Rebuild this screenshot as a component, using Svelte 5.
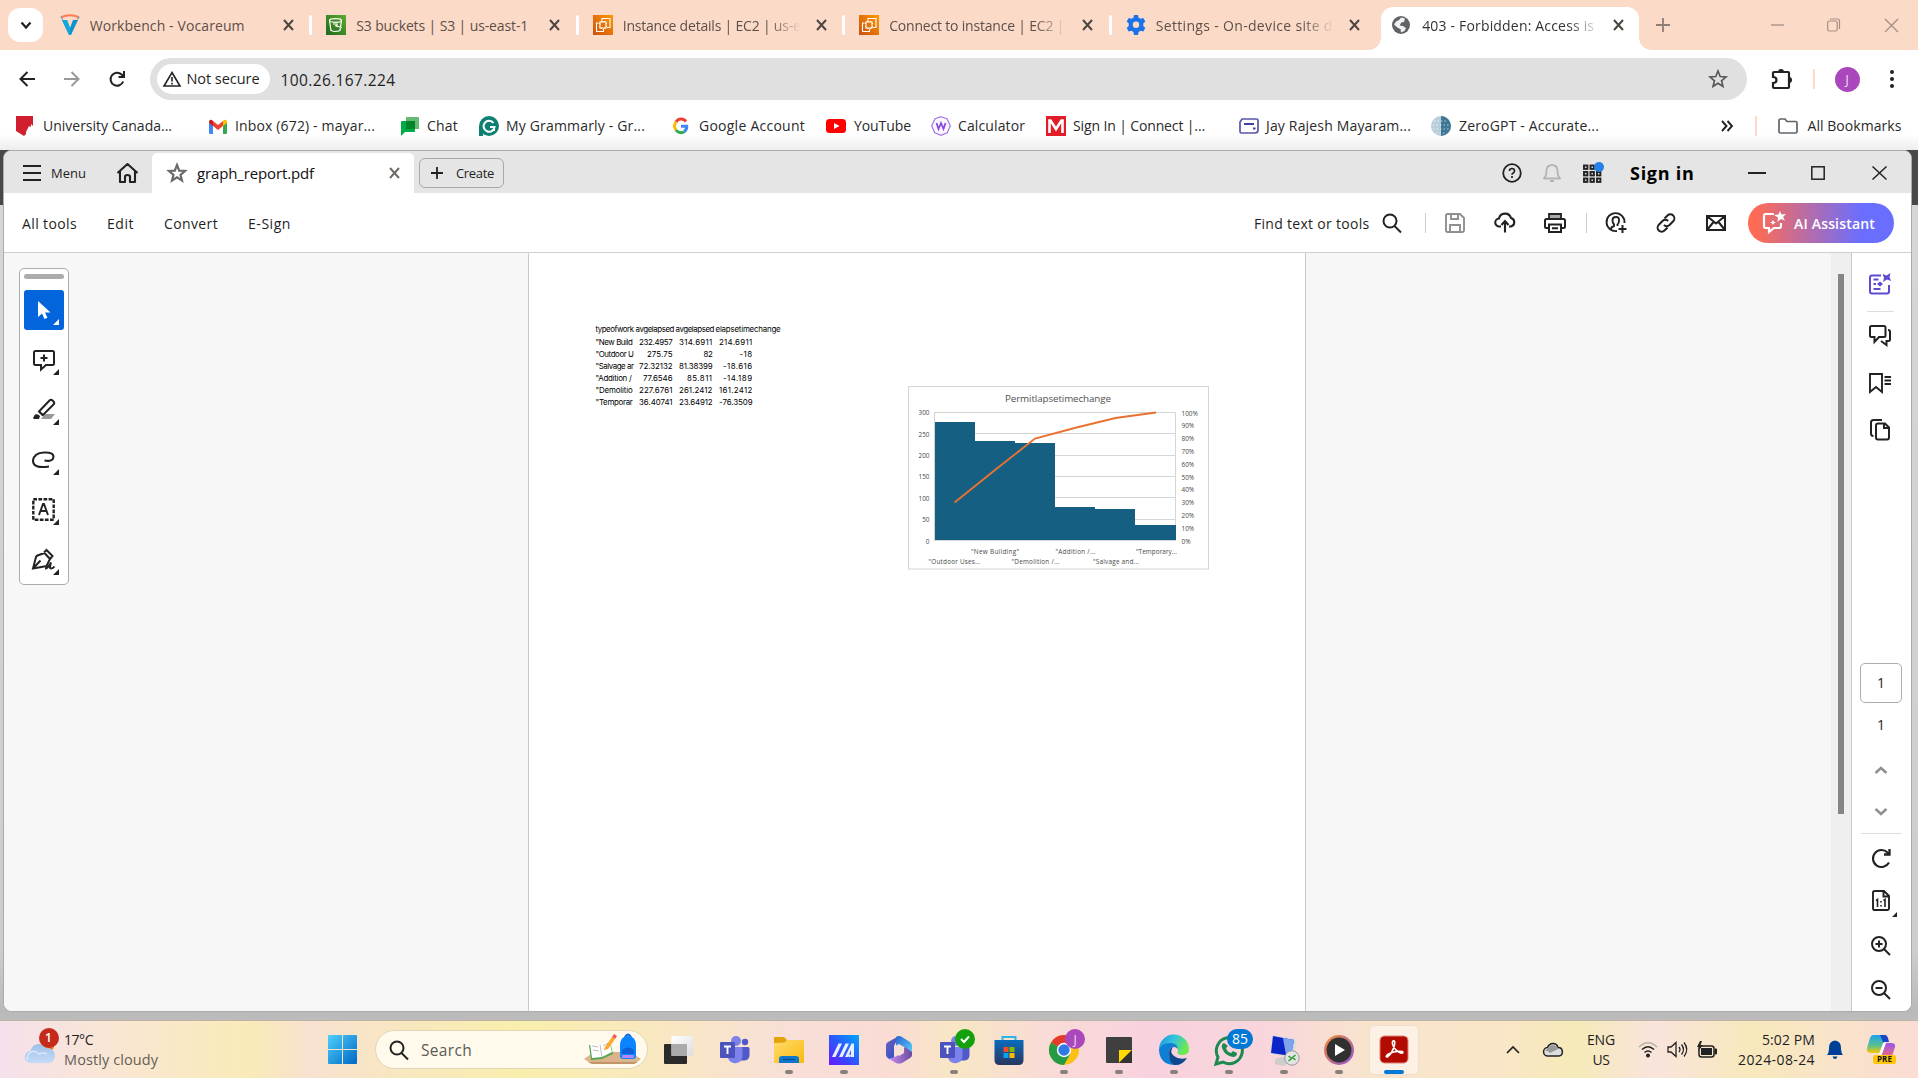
<script>
  // Adjusts tracking so that a label takes a given width.
  function fit(node, width) {
    if (!width) return;
    const natural = node.getBoundingClientRect().width;
    const count = node.textContent.length;
    node.style.letterSpacing = (width - natural) / count + 'px';
  }

  const ec2 = `<defs><linearGradient id="ec" x1="0" y1="1" x2="1" y2="0"><stop offset="0" stop-color="#cc4f10"/><stop offset="1" stop-color="#f90"/></linearGradient></defs><rect width="20" height="20" fill="url(#ec)"/><g fill="none" stroke="#fff" stroke-width="1.100"><path d="M9 6.500V3.500h8v9h-3M5.500 8H3.500v8.500h7V14"/><rect x="7" y="7" width="6" height="6"/><path d="M6 8.500h1M6 11.500h1M13 8.500h1M13 11.500h1M8.500 6v1M11.500 6v1M8.500 13v1M11.500 13v1"/></g>`;
  const teams = `<circle cx="17" cy="6" r="5" fill="#7b83eb"/><circle cx="26" cy="7" r="3.200" fill="#5059c9"/><path d="M21 12h8q1.500 0 1.500 1.500V20q0 5-5 5.500h-5z" fill="#5059c9"/><path d="M9 12h14.500v10a7.500 7.500 0 0 1-14.500 1z" fill="#7b83eb"/><rect x="1" y="7" width="15" height="16" rx="1" fill="#4b53bc"/><path d="M5 11.500h7M8.500 11.500V19" stroke="#fff" stroke-width="1.900"/>`;

  const art = {
    chevDown: `<path d="M2.500 4.500l4.500 5 4.500-5" fill="none" stroke="#222" stroke-width="2.200"/>`,
    voc: `<path d="M1.500 2Q10-1.500 18.500 2" fill="none" stroke="#ff7a50" stroke-width="2"/><path d="M0 2l2-1 1.500 5zM20 2l-2-1-1.500 5z" fill="#99a"/><path d="M2 5h5l3 8 3-8h5l-7 15h-2z" fill="#0a93cc"/><path d="M2 5h5l3 8v7H9z" fill="#12a8dc"/>`,
    s3: `<defs><linearGradient id="s3g" x1="0" y1="1" x2="1" y2="0"><stop offset="0" stop-color="#1c6a1c"/><stop offset="1" stop-color="#5faa30"/></linearGradient></defs><rect width="20" height="20" fill="url(#s3g)"/><g fill="none" stroke="#fff" stroke-width="1.200"><ellipse cx="9.500" cy="5.500" rx="6" ry="1.800"/><path d="M3.500 5.500L5 15.500q4.500 2 9 0L15.500 5.500M7 9h4v3M9 10.500l7 2"/></g>`,
    ec2,
    gear: `<path d="M8 0h4l.6 2.700 2 1.100 2.700-.9 2 3.600-2 1.900v2.700l2 2-2 3.500-2.700-.9-2 1.200L12 20H8l-.6-3.100-2-1.200-2.700.9-2-3.500 2-2V8.400l-2-1.900 2-3.600 2.700.9 2-1.100z" fill="#1a73e8"/><circle cx="10" cy="9.800" r="3.200" fill="#fcdac8"/>`,
    globe: `<circle cx="9" cy="9" r="9" fill="#5f6368"/><path d="M9 1.500l4 1-1 3.500-3 1-1 2.500 3 .5 3 2-1.500 3L9 16.500l-.5-3.500-2.500-1-4-3.500L4 5.500 7 4z" fill="#fff" opacity=".9"/><path d="M10 6l4 3-2 1-4-1z" fill="#5f6368"/>`,
    x: `<path d="M1 1l9 10M10 1L1 11" fill="none" stroke="#4c4540" stroke-width="2"/>`,
    xThin: `<path d="M1 1l13 13M14 1L1 14" fill="none" stroke="#a38f86" stroke-width="1.300"/>`,
    plus: `<path d="M7 0v14M0 7h14" stroke="#8d7d75" stroke-width="1.800"/>`,
    min: `<path d="M0 1h13" stroke="#a38f86" stroke-width="1.300"/>`,
    restore: `<g fill="none" stroke="#a38f86" stroke-width="1.200"><rect x=".7" y="3" width="9.500" height="10" rx="1.500"/><path d="M3 1h7.500q2 0 2 2v8"/></g>`,
    back: `<path d="M16 8H2M8.500 1L1.500 8l7 7" fill="none" stroke="#222" stroke-width="2"/>`,
    fwd: `<path d="M0 8h14M7.500 1l7 7-7 7" fill="none" stroke="#999" stroke-width="2"/>`,
    reload: `<path d="M14.200 10.500A6.500 6.500 0 1 1 12.600 3.500L15 6" fill="none" stroke="#222" stroke-width="2"/><path d="M15 0v6H9.500" fill="none" stroke="#222" stroke-width="2"/>`,
    warn: `<path d="M9 1.500L17 15H1z" fill="none" stroke="#222" stroke-width="1.600"/><path d="M9 6v4.500M9 11.800v1.700" stroke="#222" stroke-width="1.600"/>`,
    star: `<path d="M10 2l2.200 5.600 5.800.4-4.500 3.800 1.500 5.700-5-3.200-5 3.200 1.500-5.700L2 8l5.800-.4z" fill="none" stroke="#555" stroke-width="1.600"/>`,
    starBold: `<path d="M10 2l2.200 5.600 5.800.4-4.500 3.800 1.500 5.700-5-3.200-5 3.200 1.500-5.700L2 8l5.800-.4z" fill="none" stroke="#6b6b6b" stroke-width="2.200"/>`,
    puzzle: `<path d="M3 4h14q1 0 1 1v14q0 1-1 1H3q-1 0-1-1v-4q3.500 0 3.500-3T2 9V5q0-1 1-1z" fill="none" stroke="#222" stroke-width="2.200"/><path d="M7 4a3 3 0 0 1 6 0zM18 9a3 3 0 0 1 0 6z" fill="#222"/>`,
    dots: `<circle cx="3" cy="3" r="2" fill="#222"/><circle cx="3" cy="10" r="2" fill="#222"/><circle cx="3" cy="17" r="2" fill="#222"/>`,
    ucw: `<path d="M0 0h17v10l-2-2v3l-2-1-2 4-1 2v2l-2 2-8-5z" fill="#d0202f"/>`,
    gmail: `<path d="M0 3v11q0 1 1 1h3V6z" fill="#4285f4"/><path d="M14 6v9h3q1 0 1-1V3z" fill="#34a853"/><path d="M4 7V2l5 4 5-4v5l-5 4z" fill="#ea4335"/><path d="M0 4V3q0-3 3-2l1 1v5z" fill="#c5221f"/><path d="M18 4V3q0-3-3-2l-1 1v5z" fill="#fbbc04"/>`,
    chat: `<path d="M5 0h12q1 0 1 1v11H5z" fill="#66bb74"/><path d="M0 5q0-1 1-1h12q1 0 1 1v10H4l-4 4z" fill="#00ac47"/><rect x="5" y="4" width="9" height="8" fill="#00832d"/>`,
    grammarly: `<circle cx="10" cy="10" r="10" fill="#0d8072"/><path d="M0 10h4v10H0z" fill="#0d8072"/><path d="M14.500 7A5.500 5.500 0 1 0 15.500 11H11M15 15v-4" fill="none" stroke="#fff" stroke-width="2"/>`,
    google: `<g fill="none" stroke-width="3"><path d="M13 3.500A6 6 0 0 0 3 4" stroke="#ea4335"/><path d="M3 4a6.500 6.500 0 0 0 0 8" stroke="#fbbc04"/><path d="M3 12a6 6 0 0 0 8.500 1.500" stroke="#34a853"/><path d="M11.500 13.500Q14 11.500 13.700 8.200H8" stroke="#4285f4"/></g>`,
    youtube: `<rect width="20" height="14" rx="3.500" fill="#f00"/><path d="M8 4l5.500 3L8 10z" fill="#fff"/>`,
    calc: `<path d="M10 .7l6 2 3.300 7-3 7-6.300 2.600-6.300-2.600-3-7 3.300-7z" fill="#fbf7ff" stroke="#a274e8" stroke-width="1.200"/><path d="M5.500 7l2 6 2.500-6 2.500 6 2-6" fill="none" stroke="#8b4be0" stroke-width="1.800"/>`,
    mc: `<rect width="20" height="20" fill="#e21d25"/><path d="M3.500 17V4.500h1L10 13l5.500-8.500h1V17" fill="none" stroke="#fff" stroke-width="2.600"/>`,
    card: `<path d="M3 1h14.500q1.500 0 1.500 1.500V12q0 3-3 3H2.500Q1 15 1 13.500V4z" fill="#fff" stroke="#5656a8" stroke-width="1.700"/><path d="M5 6h10M14 10.500h2.500" stroke="#4040a0" stroke-width="1.800"/>`,
    zero: `<circle cx="10" cy="10" r="10" fill="#b8cfdb"/><path d="M10 0a10 10 0 0 1 0 20z" fill="#3f7896"/><g stroke="#fff" stroke-dasharray="1.500 2" opacity=".6"><path d="M3 5h14M2 9h16M2 13h16M5 17h10"/></g>`,
    more: `<path d="M1 1l4.500 5L1 11M6.500 1L11 6l-4.500 5" fill="none" stroke="#222" stroke-width="1.900"/>`,
    folder: `<path d="M1 2.500Q1 1 2.500 1H7l2 2.500h8.500Q19 3.500 19 5v8.500q0 1.500-1.500 1.500h-15Q1 15 1 13.500z" fill="none" stroke="#5f6368" stroke-width="1.700"/>`,
    burger: `<path d="M0 2h18M0 9h18M0 16h18" stroke="#222" stroke-width="1.900"/>`,
    home: `<path d="M1.500 11L11.500 2l10 9M4 9.500V20h5v-5.500q0-1.500 2.500-1.500t2.500 1.500V20h5V9.500" fill="none" stroke="#222" stroke-width="2.100" stroke-linejoin="round"/>`,
    plusDark: `<path d="M6 0v12M0 6h12" stroke="#222" stroke-width="1.800"/>`,
    help: `<circle cx="10" cy="10" r="8.800" fill="none" stroke="#222" stroke-width="1.800"/><path d="M7.500 8q0-2.500 2.500-2.500T12.500 8q0 1.300-1.300 2-1.200.6-1.200 1.700M10 13v2" fill="none" stroke="#222" stroke-width="1.700"/>`,
    bell: `<path d="M1 15.500q2.500-2.500 2.500-8Q4 2 9 2t5.500 5.500q0 5.500 2.500 8zM7 18h4" fill="none" stroke="#b5b5b5" stroke-width="1.900" stroke-linejoin="round"/>`,
    grid: `<g fill="none" stroke="#222" stroke-width="1.900"><rect x="1" y="3.500" width="3.400" height="3.400"/><rect x="7.500" y="3.500" width="3.400" height="3.400"/><rect x="14" y="3.500" width="3.400" height="3.400"/><rect x="1" y="10" width="3.400" height="3.400"/><rect x="7.500" y="10" width="3.400" height="3.400"/><rect x="14" y="10" width="3.400" height="3.400"/><rect x="1" y="16.500" width="3.400" height="3.400"/><rect x="7.500" y="16.500" width="3.400" height="3.400"/><rect x="14" y="16.500" width="3.400" height="3.400"/></g><circle cx="16" cy="5" r="5" fill="#2680eb"/>`,
    minDark: `<path d="M0 1h18" stroke="#222" stroke-width="1.800"/>`,
    maxDark: `<rect x=".8" y=".8" width="12.400" height="12.400" fill="none" stroke="#222" stroke-width="1.500"/>`,
    xDark: `<path d="M.5.5l14 13M14.500.5l-14 13" stroke="#222" stroke-width="1.500"/>`,
    search: `<circle cx="8" cy="8" r="6.500" fill="none" stroke="#222" stroke-width="2"/><path d="M12.500 13l6.500 6.500" stroke="#222" stroke-width="2"/>`,
    save: `<g fill="none" stroke="#8f8f8f" stroke-width="1.900"><path d="M2.500 1H15l4 4v12.500q0 1.500-1.500 1.500h-15Q1 19 1 17.500v-15Q1 1 2.500 1zM6 1v5h7V1M5 19v-7h10v7"/></g>`,
    cloud: `<path d="M7 14.500H5.500a4 4 0 0 1-.5-8A6.200 6.200 0 0 1 17 6a4.400 4.400 0 0 1 0 8.500h-2M11 20.500V9.500M7.500 13L11 9l3.500 4" fill="none" stroke="#222" stroke-width="2.100"/>`,
    print: `<path d="M5 6V1h12v5" fill="#aaa" stroke="#222" stroke-width="1.800"/><path d="M5 15H2.500Q1 15 1 13.500v-6Q1 6 2.500 6h17Q21 6 21 7.500v6q0 1.500-1.500 1.500H17M5 11.500h12V19H5zM8 15.200h6" fill="none" stroke="#222" stroke-width="2"/>`,
    person: `<path d="M19.500 11A9 9 0 1 0 12 19" fill="none" stroke="#222" stroke-width="1.900"/><path d="M6 17q0-2 3-3v-1.500Q7.500 11 7.500 8T11 5t3 3.500q0 3-1.500 4V14" fill="none" stroke="#222" stroke-width="1.900"/><path d="M17.500 13v8M13.500 17h8" stroke="#222" stroke-width="2"/>`,
    link: `<path d="M8.500 5.500L11.500 2.500a4 4 0 0 1 5.700 5.700L13.500 12a4 4 0 0 1-5.600 0M11.500 14.500L8.500 17.500a4 4 0 0 1-5.700-5.700L6.500 8a4 4 0 0 1 5.600 0" fill="none" stroke="#222" stroke-width="2"/>`,
    mail: `<path d="M1 1h18v14H1zl9 7.500L19 1M1 15l6.500-8M19 15l-6.500-8" fill="none" stroke="#222" stroke-width="2"/>`,
    ai: `<path d="M12 3H4Q2 3 2 5v10q0 2 2 2h3v4l5-4h5q2 0 2-2v-3" fill="none" stroke="#fff" stroke-width="2.200"/><path d="M18 0l1.500 3.500L24 3l-3 3 2 3.500-4-1.500-3.500 3 .5-4.500L12 4l4.500-.5z" fill="#fff"/><path d="M11 9l1 1.700 2 .8-2 .8-1 1.700-1-1.700-2-.8 2-.8z" fill="#fff"/>`,
    pointer: `<path d="M3 1v16l4-3.500L9.500 19l3-1.200L10 12.500h5.500z" fill="#fff"/>`,
    note: `<path d="M2.500 2h17q1.500 0 1.500 1.500v11q0 1.500-1.500 1.500H13l-5 4.500V16H2.500Q1 16 1 14.500v-11Q1 2 2.500 2zM11 5.500v7M7.500 9h7" fill="none" stroke="#222" stroke-width="2"/>`,
    marker: `<path d="M12 15h10l-4 5H8z" fill="#999"/><path d="M6 12.500L16.500 1.500q1.500-1.500 3 0l1 1q1.500 1.500 0 3L10 16zM6 12.500l4 4" fill="#fff" stroke="#222" stroke-width="2"/><path d="M0 19l2-3.500q3-1 5 1.500l-1 3H1z" fill="#222"/>`,
    loop: `<path d="M17 16.500Q1 19 1 10.500 2 3 12 2.500q9.500-.5 9.500 4.500-.5 5-9 3.500" fill="none" stroke="#222" stroke-width="2.100"/>`,
    textbox: `<rect x="1.300" y="1.300" width="20.400" height="20.400" fill="none" stroke="#222" stroke-width="2.400" stroke-dasharray="3.700 1.400"/><path d="M7 17l4-11h1l4 11M8.500 13h6" fill="none" stroke="#222" stroke-width="1.900"/>`,
    pen: `<path d="M1 19.500L4 8q.5-1 1.500-1.500l7-2.500 5.500 6-3 6q-.5 1-1.500 1.300zM1 19.500l7.500-8M12 3.500L14.500 1l6 6L18 10" fill="none" stroke="#222" stroke-width="2"/><path d="M13 19.500q3 0 6-6-2 6 0 6t3.500-2" fill="none" stroke="#222" stroke-width="2"/>`,
    gen: `<path d="M12 2.500H3q-2 0-2 2v14q0 2 2 2h15q2 0 2-2V12M4.500 6.500h5M4.500 11H7M4.500 16h7" fill="none" stroke="#5c4bd3" stroke-width="2"/><path d="M13.500 1l4 1.500L21.500 0l-1 4 1.500 4-4-1.500-4 2.500 1-4z" fill="#5c4bd3"/><path d="M11 8.500l3 2.500-3 2.500-3-2.500z" fill="#5c4bd3"/>`,
    comments: `<path d="M2.500 1H15q1.500 0 1.500 1.500v8q0 1.500-1.500 1.500h-5l-4.500 5v-5H2.500Q1 12 1 10.500v-8Q1 1 2.500 1zM19 5q2 0 2 1.500v8q0 1.500-2 1.500h-1.500v4L12 16" fill="none" stroke="#222" stroke-width="2"/>`,
    bookmark: `<path d="M1 2h12v18l-6-5-6 5zM15.500 5H22M15.500 8.500H22M15.500 12H22" fill="none" stroke="#222" stroke-width="1.900"/>`,
    pages: `<path d="M3.500 17Q1 17 1 14.500v-11Q1 1 3.500 1H12M8 4.500h7l4 4v10q0 2-2 2H8q-2 0-2-2v-12q0-2 2-2zM14 4.500V9h5" fill="none" stroke="#222" stroke-width="2"/>`,
    up: `<path d="M1.500 8L7 3l5.500 5" fill="none" stroke="#909090" stroke-width="2.500"/>`,
    down: `<path d="M1.500 2L7 7l5.500-5" fill="none" stroke="#909090" stroke-width="2.500"/>`,
    rotate: `<path d="M18 14.500A8.500 8.500 0 1 1 16.500 4.500L18 6.500" fill="none" stroke="#222" stroke-width="2.100"/><path d="M18.500 1v5.500H13" fill="none" stroke="#222" stroke-width="2.300"/>`,
    actual: `<path d="M3 1h9l5 5v12.500q0 1.500-1.500 1.500H3q-2 0-2-1.500v-16Q1 1 3 1zM11.500 1v5.500H17" fill="none" stroke="#222" stroke-width="1.900"/><path d="M4 10.500l1.500-1V17M11.500 10.500l1.500-1V17M9 11v1.600M9 15v1.600" fill="none" stroke="#222" stroke-width="1.600"/>`,
    zin: `<circle cx="8" cy="8" r="7" fill="none" stroke="#222" stroke-width="2"/><path d="M13 13l6 6M8 4.500v7M4.500 8h7" stroke="#222" stroke-width="2"/>`,
    zout: `<circle cx="8" cy="8" r="7" fill="none" stroke="#222" stroke-width="2"/><path d="M13 13l6 6M4.500 8h7" stroke="#222" stroke-width="2"/>`,
    weather: `<defs><linearGradient id="wc" x1="0" y1="0" x2="0" y2="1"><stop offset="0" stop-color="#9fbfe9"/><stop offset="1" stop-color="#c5dcf6"/></linearGradient></defs><circle cx="24" cy="18" r="5" fill="#ef7a14"/><path d="M6 35a6 6 0 0 1-.5-12A8.500 8.500 0 0 1 21 20a7.800 7.800 0 0 1 4 15z" fill="url(#wc)"/><path d="M3 32a6 6 0 0 1 3-8q4-2 8 2 4-2 8 0" fill="none" stroke="#d9e9fb" stroke-width="1.500"/><circle cx="24" cy="10" r="10" fill="#c42b1c"/>`,
    win: `<defs><linearGradient id="wn" x1="0" y1="0" x2="1" y2="1"><stop offset="0" stop-color="#4fd0fb"/><stop offset="1" stop-color="#0067c6"/></linearGradient></defs><path d="M1 0h13v14H0V1q0-1 1-1zM15 0h13q1 0 1 1v13H15zM0 15h14v14H1q-1 0-1-1zM15 15h14v13q0 1-1 1H15z" fill="url(#wn)"/>`,
    school: `<path d="M0 25l10-7h36l11 7-7 5H8z" fill="#dcb48c"/><path d="M8 30h42l4-2H4z" fill="#c2946a"/><path d="M5 11l11 2 10-6 3 13-11 5-11 1z" fill="#56a552"/><path d="M6 9l10 2 9-5 3 12-10 5-10 1z" fill="#fff"/><path d="M16 11l2 12M8 12l6 1M9 16l6 1M19 12l5-3M20 16l5-3" stroke="#bbb"/><path d="M21 13l7-10 3 2-7 10-4 1z" fill="#fda92d"/><path d="M28 3l2-3 3 2-2 3z" fill="#ef5b5b"/><path d="M41 3q3-5 6 0" fill="none" stroke="#0b62d6" stroke-width="2"/><path d="M36 12q0-10 8-10t8 10v10q0 3-3 3H39q-3 0-3-3z" fill="#0a84ff"/><path d="M38 16q6-5 12 0v4H38z" fill="#0f5fd8"/><rect x="38" y="21" width="12" height="3" rx="1" fill="#b388ff"/>`,
    taskview: `<defs><linearGradient id="tv" x1="0" y1="0" x2="1" y2="1"><stop offset="0" stop-color="#fff"/><stop offset="1" stop-color="#ddd"/></linearGradient></defs><rect x="0" y="9" width="23" height="20" rx="1" fill="#2b2b2b"/><rect x="7.500" y="1" width="22" height="20" rx="1" fill="url(#tv)"/><rect x="7.500" y="9" width="15.500" height="12" fill="#aaa"/>`,
    teams,
    explorer: `<defs><linearGradient id="fx" x1="0" y1="0" x2="1" y2="1"><stop offset="0" stop-color="#ffdc6b"/><stop offset="1" stop-color="#fbb911"/></linearGradient></defs><path d="M0 8V3q0-1 1-1h9l3 3h15q2 0 2 2z" fill="#e2a20a"/><path d="M0 8h10l3-3h16q1 0 1 1v21q0 1-1 1H1q-1 0-1-1z" fill="url(#fx)"/><path d="M5 28v-4q0-3 3-3h14q3 0 3 3v4z" fill="#0f78cc"/><path d="M9 24.500h12" stroke="#0a4e8c" stroke-width="1.200"/>`,
    asus: `<defs><linearGradient id="as" x1="0" y1="1" x2="1" y2="0"><stop offset="0" stop-color="#6a18ff"/><stop offset=".5" stop-color="#2b56ff"/><stop offset="1" stop-color="#00a8ff"/></linearGradient></defs><rect width="30" height="30" fill="url(#as)"/><path d="M3 22L9.500 8.500H13L6.500 22zM10 22L16.500 8.500H20L13.500 22zM16 22l6.500-13.500H25V22h-3v-7l-3 7z" fill="#e7efff"/><circle cx="20.500" cy="20.800" r="1.400" fill="#e7efff"/>`,
    m365: `<defs><linearGradient id="ma" x1="0" y1="0" x2="1" y2="1"><stop offset="0" stop-color="#7d5fc0"/><stop offset="1" stop-color="#174fc4"/></linearGradient><linearGradient id="mb" x1="0" y1="0" x2="1" y2="1"><stop offset="0" stop-color="#2c62d0"/><stop offset="1" stop-color="#58d5ff"/></linearGradient><linearGradient id="mc5" x1="0" y1="0" x2="1" y2="0"><stop offset="0" stop-color="#c58cf2"/><stop offset="1" stop-color="#6b4a9c"/></linearGradient></defs><path d="M15 1L4 7q-2 1-2 3v10q0 2 3 4l5-1V11z" fill="url(#ma)"/><path d="M12 2q3-2 6 0l8 5q2 1 2 4v8l-8-7-8-1z" fill="url(#mb)"/><path d="M28 17v3q0 2-2 3l-8 5q-3 1-6 0l-7-4 8-3 8-9z" fill="url(#mc5)"/><path d="M11 11l4-2 5 3v6l-5 3-4-3z" fill="#f6dfd6"/>`,
    teamsOk: teams + `<circle cx="26" cy="4" r="10" fill="#13a10e"/><path d="M22 4l3 3 5-5.500" fill="none" stroke="#fff" stroke-width="1.900"/>`,
    store: `<defs><linearGradient id="st" x1="0" y1="0" x2="0" y2="1"><stop offset="0" stop-color="#0a6cbe"/><stop offset="1" stop-color="#27365e"/></linearGradient></defs><path d="M8.500 6V2h13v4" fill="none" stroke="#29b6ea" stroke-width="2"/><path d="M.5 5h29v20q0 5-5 5H5.500q-5 0-5-5z" fill="url(#st)"/><path d="M9.500 12h5v5h-5z" fill="#f25022"/><path d="M15.500 12h5v5h-5z" fill="#7fba00"/><path d="M9.500 18h5v5h-5z" fill="#00a4ef"/><path d="M15.500 18h5v5h-5z" fill="#ffb900"/>`,
    chrome: `<circle cx="15" cy="15" r="15" fill="#fbc116"/><path d="M15 15L2 7.500A15 15 0 0 1 28 7.500z" fill="#e33b2e"/><path d="M2 7.500A15 15 0 0 0 15 30l6.500-11.500L15 15z" fill="#269a44"/><circle cx="15" cy="15" r="7.200" fill="#fff"/><circle cx="15" cy="15" r="5.700" fill="#3079e8"/><circle cx="26" cy="4" r="10" fill="#ab47bc"/><text x="26" y="8.500" font-size="12" fill="#f1dcf5" text-anchor="middle">J</text>`,
    sticky: `<rect x="2" y="2" width="26" height="26" rx="1" fill="#3f3f3f"/><path d="M15 15h13L15 28z" fill="#ffda00"/><path d="M28 15v13H15z" fill="#333"/>`,
    edge: `<defs><linearGradient id="eg" x1="0" y1="0" x2="1" y2=".4"><stop offset="0" stop-color="#1b8fdc"/><stop offset=".5" stop-color="#34c3e0"/><stop offset="1" stop-color="#6bea4e"/></linearGradient></defs><path d="M0 15A15 15 0 0 1 30 14q0 6-7 6-6 0-4-4 1-6-8-5Q4 12 6 20z" fill="url(#eg)"/><path d="M0 15Q2 8 11 8q8 0 8 7-1-3-4-3-5 0-5 6 0 8 8 12Q1 31 0 15z" fill="#0f7fd6"/><path d="M10 18q0-5 4-6-4 5 1 9 5 4 13 2-5 8-13 7-5-3-5-12z" fill="#11478f"/>`,
    whats: `<path d="M2 29l2-7A13 13 0 1 1 9 27z" fill="none" stroke="#1d8a4f" stroke-width="3"/><path d="M10 8q-3 1-2 5 3 8 11 9 4 0 4-4l-4-2-2 2q-4-1-5-5l2-2z" fill="#1d8a4f"/><rect x="13" y="-6" width="26" height="20" rx="10" fill="#0078d4"/><text x="26" y="9" font-size="14" fill="#fff" text-anchor="middle">85</text>`,
    rdp: `<path d="M6 24l12-3 4 6-8 4-8-2z" fill="#ccc"/><path d="M3 0l25 4-3 18L1 19z" fill="#ddd"/><path d="M4 1l21 4-3 16L2 18z" fill="#0b25c8"/><path d="M14 3l11 2-3 16-5-1z" fill="#7fa4ee"/><circle cx="23" cy="23" r="7.200" fill="#e4e4e4" stroke="#999"/><path d="M19.500 21l3 2.500-3 2.500M26.500 20l-3 2.500 3 2.500" fill="none" stroke="#34a033" stroke-width="1.600"/>`,
    media: `<defs><linearGradient id="mp" x1="0" y1="0" x2="1" y2="1"><stop offset="0" stop-color="#f58d2f"/><stop offset="1" stop-color="#9152d8"/></linearGradient></defs><circle cx="15" cy="15" r="15" fill="url(#mp)"/><circle cx="15" cy="15" r="12.500" fill="#303030"/><path d="M11 9l10 6-10 6z" fill="#fff"/>`,
    acrobat: `<rect x="1" y="1" width="28" height="27" rx="4.500" fill="#b30b00" stroke="#d9867c"/><path d="M14 6q2.500-1 1.500 4-2 8-7 12-3 0 1-3 6-3.500 14-2.500 1.500 2-2 1.500-6-2.500-8-9-.3-3 .5-3z" fill="none" stroke="#fff" stroke-width="1.600"/>`,
    trayUp: `<path d="M1 8l6-6 6 6" fill="none" stroke="#222" stroke-width="1.700"/>`,
    trayCloud: `<path d="M5 14a4.200 4.200 0 0 1-.5-8.400Q6 1.500 10 1.500T15 5.500a4.300 4.300 0 0 1 1 8.500z" fill="#ddd" stroke="#222" stroke-width="1.500"/><path d="M5 6q3-5 8-2 2 1 2 3l-8 4q-3-3-5-2z" fill="#999"/>`,
    wifi: `<g fill="none" stroke="#222" stroke-width="1.500"><path d="M1 6q9-8.500 18 0" stroke="#b9b09f"/><path d="M4 8.500q6-5.500 12 0M6.500 11.500q3.500-3 7 0"/></g><circle cx="10" cy="14.500" r="2" fill="#222"/>`,
    sound: `<path d="M1 6h3l5-4.500v14L4 11H1zM12 6q2 2.500 0 5M14.500 3.500q4 5 0 10M17 1.500q5.500 7 0 14" fill="none" stroke="#222" stroke-width="1.300"/>`,
    battery: `<rect x="2" y="5" width="15" height="11" rx="2.500" fill="none" stroke="#222" stroke-width="1.500"/><rect x="4" y="7" width="11" height="7" fill="#222"/><path d="M18 8v5h1.500V8z" fill="#222" stroke="#222"/><path d="M3 0L0 6h2.500L1 10l5-6H3.500L5 0z" fill="#222"/>`,
    trayBell: `<path d="M0 15q2-2 2-7 0-7 6-7.500Q14 1 14 8q0 5 2 7zM5.500 16.500h5q-1 2.500-2.500 2.500t-2.500-2.500z" fill="#003f98"/>`,
    copilot: `<defs><linearGradient id="ca" x1="0" y1="0" x2="0" y2="1"><stop offset="0" stop-color="#1ba4f0"/><stop offset=".6" stop-color="#5cc08a"/><stop offset="1" stop-color="#ffc800"/></linearGradient><linearGradient id="cb" x1="0" y1="0" x2="0" y2="1"><stop offset="0" stop-color="#9c55f0"/><stop offset="1" stop-color="#ff6f61"/></linearGradient></defs><path d="M7 0h13l-5 18H5Q0 18 1 13L4 3q1-3 3-3z" fill="url(#ca)"/><path d="M14 0h5q2 0 3 3l1 4h-6z" fill="#1b46c8"/><path d="M17 8h8q5 0 4 4l-3 9q-1 4-5 4h-9z" fill="url(#cb)"/><path d="M17 8h3l-5 14h-3z" fill="#fff"/><rect x="7" y="20" width="23" height="9" rx="2.500" fill="#ffc60a"/><text x="18.500" y="27.300" font-size="8" font-weight="bold" fill="#111" text-anchor="middle">PRE</text>`
  };

  const tabs = [
    ['voc', 20, 20, 'Workbench - Vocareum', 155],
    ['s3', 20, 20, 'S3 buckets | S3 | us-east-1', 172],
    ['ec2', 20, 20, 'Instance details | EC2 | us-e', 178],
    ['ec2', 20, 20, 'Connect to instance | EC2 |', 175],
    ['gear', 20, 20, 'Settings - On-device site d', 177],
    ['globe', 18, 18, '403 - Forbidden: Access is', 172]
  ];
  const marks = [
    ['ucw', 17, 20, 10, 'University Canada...', 129],
    ['gmail', 18, 15, 8, 'Inbox (672) - mayar...', 140],
    ['chat', 18, 19, 8, 'Chat', 31],
    ['grammarly', 20, 20, 7, 'My Grammarly - Gr...', 139],
    ['google', 16, 16, 10, 'Google Account', 106],
    ['youtube', 20, 14, 8, 'YouTube', 57],
    ['calc', 20, 20, 7, 'Calculator', 67],
    ['mc', 20, 20, 7, 'Sign In | Connect |...', 132],
    ['card', 20, 16, 7, 'Jay Rajesh Mayaram...', 145],
    ['zero', 20, 20, 8, 'ZeroGPT - Accurate...', 140]
  ];
  const tools = [['pointer', 18, 20], ['note', 22, 22], ['marker', 22, 22], ['loop', 23, 20], ['textbox', 23, 23], ['pen', 23, 22]];
  const rows = [
    ['"New Build', 37, '232.4957', '314.6911', '214.6911'],
    ['"Outdoor U', 38, '275.75', '82', '-18'],
    ['"Salvage ar', 38, '72.32132', '81.38399', '-18.616'],
    ['"Addition /', 36, '77.6546', '85.811', '-14.189'],
    ['"Demolitio', 37, '227.6761', '261.2412', '161.2412'],
    ['"Temporar', 37, '36.40741', '23.64912', '-76.3509']
  ];
  const bars = [275.75, 232, 227, 77.6, 73, 35];
  const cats = [
    ['"Outdoor Uses...', 46.5, 178, 52], ['"New Building"', 87, 168, 48], ['"Demolition /...', 127.500, 178, 48],
    ['"Addition /...', 167.500, 168, 40], ['"Salvage and...', 208, 178, 46], ['"Temporary...', 248.500, 168, 41]
  ];
  const apps = [
    ['taskview', 0], ['teams', 0], ['explorer', 1], ['asus', 1], ['m365', 0], ['teamsOk', 1], ['store', 0],
    ['chrome', 1], ['sticky', 1], ['edge', 1], ['whats', 1], ['rdp', 1], ['media', 1], ['acrobat', 2]
  ];
</script>

{#snippet ic(name, w, h)}
  <svg class="ic" width={w} height={h} viewBox="0 0 {w} {h}">{@html art[name]}</svg>
{/snippet}

<div class="screen">
  <header class="chrome">
    <div class="strip">
      <div class="drop">{@render ic('chevDown', 14, 14)}</div>
      {#each tabs as [icon, w, h, title, width], i}
        <div class="tab" class:active={i === 5}>
          <span class="fav">{@render ic(icon, w, h)}</span>
          <span class="title" class:fade={i > 1}><span class="t" use:fit={width}>{title}</span></span>
          <span class="close">{@render ic('x', 11, 12)}</span>
          {#if i < 4}<i class="bar"></i>{/if}
        </div>
      {/each}
      <div class="new">{@render ic('plus', 14, 14)}</div>
      <div class="winctl">{@render ic('min', 13, 2)}{@render ic('restore', 14, 14)}{@render ic('xThin', 15, 15)}</div>
    </div>
    <div class="nav">
      <div class="arrows">{@render ic('back', 17, 16)}{@render ic('fwd', 17, 16)}{@render ic('reload', 17, 17)}</div>
      <div class="omni">
        <div class="chip">{@render ic('warn', 18, 17)}<span class="t" use:fit={73}>Not secure</span></div>
        <span class="t url" use:fit={115}>100.26.167.224</span>
        <span class="ostar">{@render ic('star', 20, 20)}</span>
      </div>
      <div class="navend">{@render ic('puzzle', 22, 22)}<i class="psep"></i><span class="avatar">J</span>{@render ic('dots', 6, 20)}</div>
    </div>
    <div class="marks">
      {#each marks as [icon, w, h, gap, label, width]}
        <div class="mark">{@render ic(icon, w, h)}<span class="t" style:margin-left="{gap}px" use:fit={width}>{label}</span></div>
      {/each}
      <div class="mark">{@render ic('more', 12, 12)}</div>
      <div class="mark"><i class="psep"></i></div>
      <div class="mark">{@render ic('folder', 20, 16)}<span class="t all" use:fit={94}>All Bookmarks</span></div>
    </div>
  </header>

  <main class="desk">
    <div class="win">
      <div class="titlebar">
        <div class="menu">{@render ic('burger', 18, 18)}<span class="t" use:fit={35}>Menu</span></div>
        <div class="home">{@render ic('home', 23, 22)}</div>
        <div class="doc">{@render ic('starBold', 20, 20)}<span class="t" use:fit={117}>graph_report.pdf</span><span class="docx">{@render ic('x', 11, 12)}</span></div>
        <div class="create">{@render ic('plusDark', 12, 12)}<span class="t" use:fit={38}>Create</span></div>
        <div class="tright">
          {@render ic('help', 20, 20)}{@render ic('bell', 18, 20)}{@render ic('grid', 21, 21)}
          <b class="t sign" use:fit={64.5}>Sign in</b>
          {@render ic('minDark', 18, 2)}{@render ic('maxDark', 14, 14)}{@render ic('xDark', 15, 14)}
        </div>
      </div>
      <div class="toolbar">
        <div class="tmenu">
          <span class="t" use:fit={55}>All tools</span><span class="t" use:fit={27}>Edit</span><span class="t" use:fit={54}>Convert</span><span class="t" use:fit={43}>E-Sign</span>
        </div>
        <div class="actions">
          <span class="t" use:fit={115.5}>Find text or tools</span>
          {@render ic('search', 20, 20)}<i></i>{@render ic('save', 20, 20)}{@render ic('cloud', 22, 21)}{@render ic('print', 22, 20)}<i></i>{@render ic('person', 22, 22)}{@render ic('link', 20, 20)}{@render ic('mail', 20, 16)}
        </div>
        <div class="aibtn">{@render ic('ai', 25, 24)}<span class="t" use:fit={81}>AI Assistant</span></div>
      </div>
      <div class="body">
        <div class="left">
          <div class="palette">
            <div class="grip"></div>
            {#each tools as [name, w, h], i}
              <div class="tool" class:on={i === 0}>{@render ic(name, w, h)}<i class="tri"></i></div>
            {/each}
          </div>
        </div>
        <div class="page">
          <div class="sheet">
            <div class="r head">
              {#each [['typeofwork', 38], ['avgelapsed', 38.5], ['avgelapsed', 38.5], ['elapsetimechange', 65]] as [label, width]}
                <span class="t" use:fit={width}>{label}</span>
              {/each}
            </div>
            {#each rows as [label, width, ...values]}
              <div class="r"><span class="t" use:fit={width}>{label}</span>{#each values as v}<span class="num"><span class="t" use:fit={v.length * 4 + (v.includes('.') ? 1.5 : 1)}>{v}</span></span>{/each}</div>
            {/each}
          </div>
          <div class="chartbox">
            <svg width="301" height="184" viewBox="0 0 301 184">
              <rect x=".5" y=".5" width="300" height="182.500" fill="#fff" stroke="#d5d5d5" />
              <text class="ct" x="150" y="16" text-anchor="middle" textLength="106">Permitlapsetimechange</text>
              {#each [0, 50, 100, 150, 200, 250, 300] as v}
                <path d="M26 {154.5 - Math.round(v * 0.4267)}H268" stroke="#d5d5d5" />
                <text class="cl" x="21.500" y={157.5 - v * 0.4267} text-anchor="end">{v}</text>
              {/each}
              <path d="M26.500 26.500V154M267.500 26.500V154" stroke="#d5d5d5" />
              {#each bars as v, i}
                <rect x={27 + Math.floor(i * 40.17)} y={154 - Math.round(v * 0.4267)} width={Math.floor((i + 1) * 40.17) - Math.floor(i * 40.17)} height={Math.round(v * 0.4267)} fill="#156082" />
              {/each}
              {#each [0, 10, 20, 30, 40, 50, 60, 70, 80, 90, 100] as v}
                <text class="cl" x="273.500" y={157.5 - v * 1.28}>{v}%</text>
              {/each}
              <path d="M46.500 116.500L87 84l40-31.500 41.500-11 39-9.500L248 26.500" fill="none" stroke="#e97132" stroke-width="1.900" />
              {#each cats as [label, x, y, len]}
                <text class="cl" {x} {y} text-anchor="middle" textLength={len}>{label}</text>
              {/each}
            </svg>
          </div>
        </div>
        <div class="right"></div>
        <div class="track"><div class="thumb"></div></div>
        <aside class="side">
          <div class="top">
            {@render ic('gen', 22, 22)}<i></i>{@render ic('comments', 22, 22)}{@render ic('bookmark', 22, 22)}{@render ic('pages', 20, 22)}
          </div>
          <div class="pnum">1</div>
          <div class="ptotal">1</div>
          <div class="chevs">{@render ic('up', 14, 10)}{@render ic('down', 14, 10)}</div>
          <i class="sline"></i>
          <div class="zoom">
            {@render ic('rotate', 20, 20)}
            <span class="act">{@render ic('actual', 18, 22)}<i class="tri"></i></span>
            {@render ic('zin', 20, 20)}{@render ic('zout', 20, 20)}
          </div>
        </aside>
      </div>
    </div>
  </main>

  <footer class="taskbar">
    <div class="weather">
      <span class="wicon">{@render ic('weather', 34, 36)}<b>1</b></span>
      <div><span class="t" use:fit={29}>17°C</span><span class="t dim" use:fit={94}>Mostly cloudy</span></div>
    </div>
    <div class="start">{@render ic('win', 29, 29)}</div>
    <div class="find">{@render ic('search', 20, 20)}<span class="t" use:fit={51}>Search</span><span class="pic">{@render ic('school', 57, 31)}</span></div>
    <div class="apps">
      {#each apps as [name, state]}
        <div class="app" class:current={state === 2}>{@render ic(name, 30, 30)}{#if state}<i class="ind"></i>{/if}</div>
      {/each}
    </div>
    <div class="tray">
      {@render ic('trayUp', 14, 10)}{@render ic('trayCloud', 20, 16)}
      <div class="lang"><span class="t" use:fit={28}>ENG</span><span class="t" use:fit={17}>US</span></div>
      <div class="sys">{@render ic('wifi', 20, 18)}{@render ic('sound', 21, 17)}{@render ic('battery', 21, 18)}</div>
      <div class="clock"><span class="t" use:fit={53}>5:02 PM</span><span class="t" use:fit={77}>2024-08-24</span></div>
      {@render ic('trayBell', 16, 19)}{@render ic('copilot', 30, 30)}
    </div>
  </footer>
</div>

<style>
  :global(body) { margin: 0; overflow: hidden; }
  .screen { width: 1918px; height: 1078px; display: flex; flex-direction: column; overflow: hidden; font: 14px/20px "Open Sans", "Noto Sans", sans-serif; color: #1f1f1f; }
  .screen * { box-sizing: border-box; }
  .ic { display: block; flex: none; overflow: visible; }
  .t { display: inline-block; white-space: nowrap; flex: none; }

  .chrome { height: 150px; flex: none; background: linear-gradient(#fff 134px, #ededed 150px); }
  .strip { height: 50px; background: #fcdac8; display: flex; }
  .drop { width: 35px; height: 34px; margin: 8px 2.5px 0 8px; border-radius: 12px; background: #fff; display: grid; place-items: center; }
  .tab { width: 266.5px; height: 50px; display: flex; align-items: center; flex: none; position: relative; color: #5d5049; }
  .fav { width: 30px; margin-left: 14.2px; }
  .title { width: 184px; overflow: hidden; display: block; height: 21px; padding-top: 1px; }
  .title.fade { width: 178px; margin-right: 6px; mask-image: linear-gradient(90deg, #000 82%, transparent); }
  .close { margin-left: 9px; }
  .bar { margin-left: auto; width: 3px; height: 20px; border-radius: 2px; background: #fff; }
  .active { color: #333; }
  .active .close { margin-left: 7px; }
  .active::before { content: ''; position: absolute; left: 3px; right: 6px; top: 7px; bottom: 0; background: #fff; border-radius: 12px 12px 0 0; }
  .active::after { content: ''; position: absolute; left: -9px; right: -6px; bottom: 0; height: 12px; background: radial-gradient(circle at 0 0, transparent 11.5px, #fff 12px) left / 12px 12px no-repeat, radial-gradient(circle at 100% 0, transparent 11.5px, #fff 12px) right / 12px 12px no-repeat; }
  .active > * { position: relative; z-index: 1; }
  .new { width: 14px; margin: 18px 0 0 11.5px; }
  .winctl { margin-left: auto; display: grid; grid-template-columns: 56px 57px 15px; align-items: center; padding-right: 19px; }
  .nav { height: 50px; padding-top: 8px; display: flex; align-items: center; }
  .arrows { display: flex; gap: 28px; width: 150px; padding-left: 19px; align-items: center; flex: none; }
  .omni { width: 1597px; height: 42px; border-radius: 21px; background: #e0e0e0; display: flex; align-items: center; padding-left: 7px; flex: none; }
  .chip { width: 113px; height: 30px; border-radius: 15px; background: #fff; display: flex; align-items: center; gap: 6px; padding-left: 5.5px; font-size: 14.5px; }
  .url { margin-left: 10.5px; font-size: 15.5px; padding-top: 1px; }
  .ostar { margin-left: auto; margin-right: 19.5px; }
  .navend { display: flex; align-items: center; padding-left: 23.5px; }
  .psep { width: 2px; height: 20px; background: #fcdac8; display: block; }
  .navend .psep { margin: 0 20px; }
  .avatar { width: 25px; height: 25px; border-radius: 50%; background: #ab47bc; color: #f3e3f6; font-size: 12px; line-height: 25px; text-align: center; margin-right: 29px; }
  .marks { height: 50px; display: grid; grid-template-columns: 193px 192px 78px 194px 153px 105px 115px 193px 192px 290px 34px 23px auto; padding-left: 16px; align-items: center; color: #2a2a2a; padding-top: 2px; }
  .mark { display: flex; align-items: center; }
  .all { margin-left: 9.5px; }

  .desk { height: 870px; flex: none; background: linear-gradient(#484848 55px, #d6d6d6 55px, #cdcdcd 800px, #b9b9b9 861px, #bcbcbc); padding: 0 6px 0 3px; }
  .win { height: 862px; border: 1px solid #ababab; border-radius: 8px 8px 9px 9px; background: #fff; overflow: hidden; display: flex; flex-direction: column; }
  .titlebar { height: 42px; background: #e5e5e5; display: flex; align-items: center; flex: none; font-size: 13px; padding-top: 1px; }
  .menu { display: flex; gap: 10px; align-items: center; padding-left: 19px; width: 111px; }
  .home { width: 37px; padding-left: .5px; }
  .doc { width: 262px; height: 40px; margin-top: 1px; background: #fff; border-radius: 5px 5px 0 0; display: flex; align-items: center; padding-left: 15px; font-size: 15px; gap: 10px; color: #111; }
  .docx { margin-left: 64.5px; opacity: .8; }
  .create { margin-left: 5px; width: 85px; height: 30px; border: 1px solid #a8a8a8; border-radius: 6px; display: flex; align-items: center; gap: 13px; padding-left: 11px; }
  .tright { margin-left: auto; display: grid; grid-template-columns: 41px 40px 47px 118px 63px 61px 15px; align-items: center; justify-items: start; padding-right: 24px; }
  .sign { font-size: 18px; font-weight: 700; color: #000; }
  .toolbar { height: 60px; border-bottom: 1px solid #d0d0d0; display: flex; align-items: center; flex: none; }
  .tmenu { display: flex; gap: 30px; padding: 2px 0 0 18px; }
  .actions { margin-left: auto; display: grid; grid-template-columns: 128px 43px 20px 49px 50px 42px 19px 51px 50px 42px; align-items: center; justify-items: start; }
  .actions i { width: 1px; height: 20px; background: #ccc; }
  .actions .t { padding-top: 2px; }
  .aibtn { width: 146px; height: 40px; border-radius: 20px; background: linear-gradient(90deg, #ff6b54 5%, #6a6eff 78%); margin-right: 17px; display: flex; align-items: center; gap: 7px; padding-left: 14px; color: #fff; font-weight: 600; }
  .aibtn .t { padding-top: 2px; }

  .body { flex: 1; display: flex; min-height: 0; background: #f7f7f7; }
  .left { width: 524px; padding: 15px 0 0 15px; flex: none; }
  .palette { width: 50px; height: 317px; border: 1px solid #adadad; border-radius: 5px; background: #fff; padding: 5px 4px; }
  .grip { width: 40px; height: 5px; border-radius: 3px; background: #acacac; margin-bottom: 11px; }
  .tool { width: 40px; height: 40px; margin-bottom: 10px; display: grid; place-items: center; position: relative; border-radius: 3px; padding: 0 1px 1px 0; }
  .tool.on { background: #0265dc; color: #fff; }
  .tri { position: absolute; right: 5px; bottom: 5px; width: 6px; height: 6px; background: #222; clip-path: polygon(100% 0, 100% 100%, 0 100%); }
  .on .tri { background: #fff; }
  .page { width: 778px; border: solid #c9c9c9; border-width: 0 1px; background: #fff; flex: none; }
  .sheet { padding: 70px 0 0 66.5px; font: 7.9px/12px Inter, sans-serif; color: #000; height: 133px; }
  .r { display: grid; grid-template-columns: 40px 40px 40px 40px; height: 12px; justify-items: start; white-space: nowrap; }
  .r.head { height: 13px; }
  .r .num { text-align: right; width: 37px; }
  .chartbox { margin-left: 379px; line-height: 0; }
  .ct { font: 9.8px "Open Sans", sans-serif; fill: #505050; }
  .cl { font: 6.4px "Open Sans", sans-serif; fill: #484848; }
  .right { flex: 1; }
  .track { width: 20px; background: #efefef; padding: 21px 0 0 7px; }
  .thumb { width: 6px; height: 540px; background: #858585; }
  .side { width: 60px; background: #fff; border-left: 1px solid #ccc; display: flex; flex-direction: column; align-items: center; padding-right: 1px; }
  .top { display: flex; flex-direction: column; align-items: center; gap: 25px; padding: 20px 2px 0 0; height: 410px; }
  .top i { width: 27px; height: 1px; background: #ddd; margin: -9px 0 -12px; }
  .pnum { width: 42px; height: 40px; border: 1px solid #adadad; border-radius: 5px; text-align: center; line-height: 37px; }
  .ptotal { margin-top: 12px; }
  .chevs { display: flex; flex-direction: column; gap: 32px; margin-top: 30px; }
  .sline { width: 41px; height: 1px; background: #ddd; margin-top: 16px; }
  .zoom { display: flex; flex-direction: column; align-items: center; gap: 24px; padding-top: 14px; }
  .act { position: relative; margin: -2px 0 0; }
  .act .tri { right: -7px; bottom: -5px; width: 5px; height: 5px; }

  .taskbar { height: 58px; flex: none; border-top: 1px solid #bdb3a4; display: flex; align-items: center; position: relative;
    background: linear-gradient(90deg, #f6e0ec 0, #f9e6d6 100px, #f9ebb8 250px, #f7e1d0 310px, #f9efac 520px, #f9e9be 640px, #f8dfd8 790px, #fadcd4 890px, #f8e6c4 955px, #f9dcd6 1040px, #f8d2de 1150px, #f8d6dc 1270px, #f8e4cc 1370px, #f9e6c8 1500px, #f6eab8 1575px, #f9e4dc 1655px, #f7e9bc 1750px, #f9e2cc 1850px, #fbdcd4 1918px); }
  .weather { width: 328px; display: flex; padding-left: 25px; flex: none; }
  .weather > div { display: flex; flex-direction: column; align-items: flex-start; margin-left: 5px; }
  .wicon { position: relative; top: -2px; }
  .wicon b { position: absolute; left: 20px; top: 0; color: #fff; font-size: 12px; font-weight: 600; }
  .dim { color: #655e55; font-size: 14.5px; }
  .start { width: 47px; }
  .find { width: 273px; height: 39px; border-radius: 20px; background: #fffaec; border: 1px solid #e4d5b8; display: flex; align-items: center; padding-left: 13px; font-size: 15.5px; color: #5d5a54; flex: none; }
  .find .t { margin-left: 12px; padding-top: 1px; }
  .pic { margin-left: auto; margin-right: 6px; }
  .apps { display: flex; margin-left: 7px; padding-top: 1px; }
  .app { width: 48px; height: 48px; margin-right: 7px; display: grid; place-items: center; position: relative; border-radius: 5px; flex: none; }
  .app.current { background: #fcf1e4; box-shadow: 0 0 0 1px #f0dfd0; }
  .ind { position: absolute; left: 20px; bottom: 0; width: 8px; height: 4px; border-radius: 2px; background: #8a807b; }
  .current .ind { left: 14px; width: 20px; background: #0078d4; }
  .tray { margin-left: auto; display: flex; align-items: center; padding-right: 22px; }
  .tray > :global(svg:nth-child(2)) { margin-left: 23px; }
  .lang { width: 28px; margin-left: 24px; display: flex; flex-direction: column; align-items: center; }
  .sys { display: flex; align-items: center; gap: 9px; margin-left: 23px; }
  .clock { display: flex; flex-direction: column; align-items: flex-end; width: 77px; margin: 0 12px 0 20px; }
  .tray > :global(svg:last-child) { margin-left: 23px; }
</style>
